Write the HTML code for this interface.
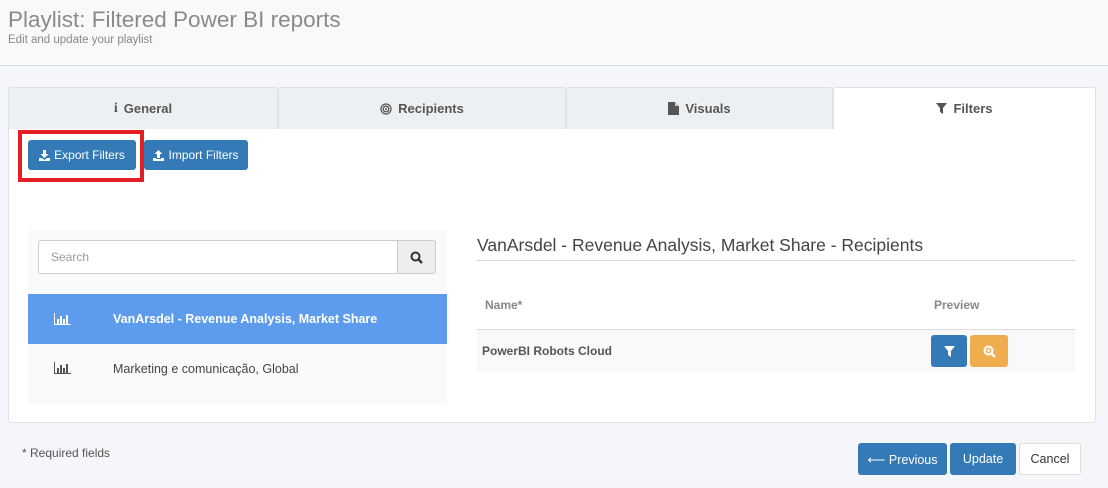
<!DOCTYPE html>
<html><head><style>
*{box-sizing:border-box;margin:0;padding:0}
body{width:1108px;height:488px;background:#f4f6f9;font-family:"Liberation Sans",sans-serif;position:relative;overflow:hidden;color:#444}
.a{position:absolute}
.hdr{left:0;top:0;width:1108px;height:66px;background:#f8f9fb;border-bottom:1px solid #d6dde5}
.tab{top:87px;height:42px;background:#edf0f2;border:1px solid #dde2e6;border-bottom:none;font-size:13px;font-weight:bold;color:#555;display:flex;align-items:center;justify-content:center;gap:6px;border-radius:3px 3px 0 0}
.btn{background:#337ab7;color:#fff;font-size:12px;display:flex;align-items:center;justify-content:center;border-radius:3px;gap:4px}
</style></head><body>
<div class="a hdr">
 <div class="a" style="left:8px;top:7px;font-size:22.5px;color:#8a8a8a">Playlist: Filtered Power BI reports</div>
 <div class="a" style="left:8px;top:34px;font-size:11.5px;color:#888">Edit and update your playlist</div>
</div>
<div class="a" style="left:8px;top:128px;width:1088px;height:295px;background:#fff;border:1px solid #dde2e6;border-top:none;border-radius:0 0 4px 4px"></div>
<div class="a tab" style="left:8px;width:270px"><b style="font-family:'Liberation Serif';font-size:14px">i</b>General</div>
<div class="a tab" style="left:278px;width:288px"><svg width="12" height="12" viewBox="0 0 12 12"><circle cx="6" cy="6" r="5" fill="none" stroke="#555" stroke-width="1.3"/><circle cx="6" cy="6" r="2.8" fill="none" stroke="#555" stroke-width="1.3"/><circle cx="6" cy="6" r="1" fill="#555"/></svg>Recipients</div>
<div class="a tab" style="left:566px;width:267px"><svg width="11" height="13" viewBox="0 0 11 13"><path d="M0 0H7L11 4V13H0Z" fill="#555"/><path d="M7 0V4H11" fill="#ccc"/></svg>Visuals</div>
<div class="a tab" style="left:833px;width:263px;background:#fff;height:42px"><svg width="11" height="11" viewBox="0 0 11 11"><path d="M0 0H11L7 5V11L4 9V5Z" fill="#555"/></svg>Filters</div>
<div class="a btn" style="left:28px;top:140px;width:108px;height:30px"><svg width="11" height="11" viewBox="0 0 11 11"><path d="M4 0H7V4H9.5L5.5 8 1.5 4H4Z M0 8H3L5.5 10 8 8H11V11H0Z" fill="#fff"/></svg>Export Filters</div>
<div class="a" style="left:18px;top:130px;width:126px;height:52px;border:4px solid #e31e24"></div>
<div class="a btn" style="left:144px;top:140px;width:104px;height:30px"><svg width="11" height="11" viewBox="0 0 11 11"><path d="M4 8H7V4H9.5L5.5 0 1.5 4H4Z M0 8H3V9H8V8H11V11H0Z" fill="#fff"/></svg>Import Filters</div>
<div class="a" style="left:28px;top:230px;width:419px;height:174px;background:#fafafa"></div>
<div class="a" style="left:38px;top:240px;width:398px;height:34px;border:1px solid #ccc;border-radius:3px;background:#fff"></div>
<div class="a" style="left:51px;top:250px;font-size:12px;color:#999">Search</div>
<div class="a" style="left:397px;top:240px;width:39px;height:34px;border:1px solid #ccc;border-radius:0 3px 3px 0;background:#eee;display:flex;align-items:center;justify-content:center"><svg width="13" height="13" viewBox="0 0 13 13"><circle cx="5.5" cy="5.5" r="4" fill="none" stroke="#333" stroke-width="2"/><path d="M8.5 8.5L12 12" stroke="#333" stroke-width="2.4"/></svg></div>
<div class="a" style="left:28px;top:294px;width:419px;height:50px;background:#5d9cec"></div>
<svg class="a" style="left:54px;top:313px" width="17" height="12" viewBox="0 0 17 12"><path d="M0.5 0V11.5H17" stroke="#fff" fill="none"/><path d="M3 6h2v5H3zM6 3h2v8H6zM9 6h2v5H9zM12 2h2v9h-2z" fill="#fff"/></svg>
<div class="a" style="left:113px;top:312px;font-size:12.5px;font-weight:bold;color:#fff">VanArsdel - Revenue Analysis, Market Share</div>
<svg class="a" style="left:54px;top:362px" width="17" height="12" viewBox="0 0 17 12"><path d="M0.5 0V11.5H17" stroke="#555" fill="none"/><path d="M3 6h2v5H3zM6 3h2v8H6zM9 6h2v5H9zM12 2h2v9h-2z" fill="#555"/></svg>
<div class="a" style="left:113px;top:362px;font-size:12.5px;color:#444">Marketing e comunicação, Global</div>
<div class="a" style="left:477px;top:235px;font-size:17.5px;color:#444">VanArsdel - Revenue Analysis, Market Share - Recipients</div>
<div class="a" style="left:477px;top:260px;width:598px;height:1px;background:#ddd"></div>
<div class="a" style="left:485px;top:298px;font-size:12px;font-weight:bold;color:#888">Name*</div>
<div class="a" style="left:934px;top:298px;font-size:12px;font-weight:bold;color:#888">Preview</div>
<div class="a" style="left:477px;top:329px;width:598px;height:43px;background:#f9f9f9;border-top:1px solid #ddd"></div>
<div class="a" style="left:482px;top:344px;font-size:12px;font-weight:bold;color:#555">PowerBI Robots Cloud</div>
<div class="a btn" style="left:931px;top:335px;width:36px;height:32px"><svg width="11" height="11" viewBox="0 0 11 11"><path d="M0 0H11L7 5V11L4 9V5Z" fill="#fff"/></svg></div>
<div class="a btn" style="left:970px;top:335px;width:38px;height:32px;background:#f0ad4e"><svg width="13" height="13" viewBox="0 0 13 13"><circle cx="5.5" cy="5.5" r="4" fill="none" stroke="#fff" stroke-width="2"/><path d="M8.5 8.5L12 12" stroke="#fff" stroke-width="2.4"/><path d="M5.5 3.5v4M3.5 5.5h4" stroke="#fff" stroke-width="1.2"/></svg></div>
<div class="a" style="left:22px;top:446px;font-size:12px;color:#555">* Required fields</div>
<div class="a btn" style="left:858px;top:443px;width:89px;height:32px;font-size:12.5px">⟵ Previous</div>
<div class="a btn" style="left:950px;top:443px;width:66px;height:32px;font-size:12.5px">Update</div>
<div class="a" style="left:1019px;top:443px;width:62px;height:32px;background:#fff;border:1px solid #ddd;border-radius:3px;font-size:12.5px;color:#333;display:flex;align-items:center;justify-content:center">Cancel</div>
</body></html>
